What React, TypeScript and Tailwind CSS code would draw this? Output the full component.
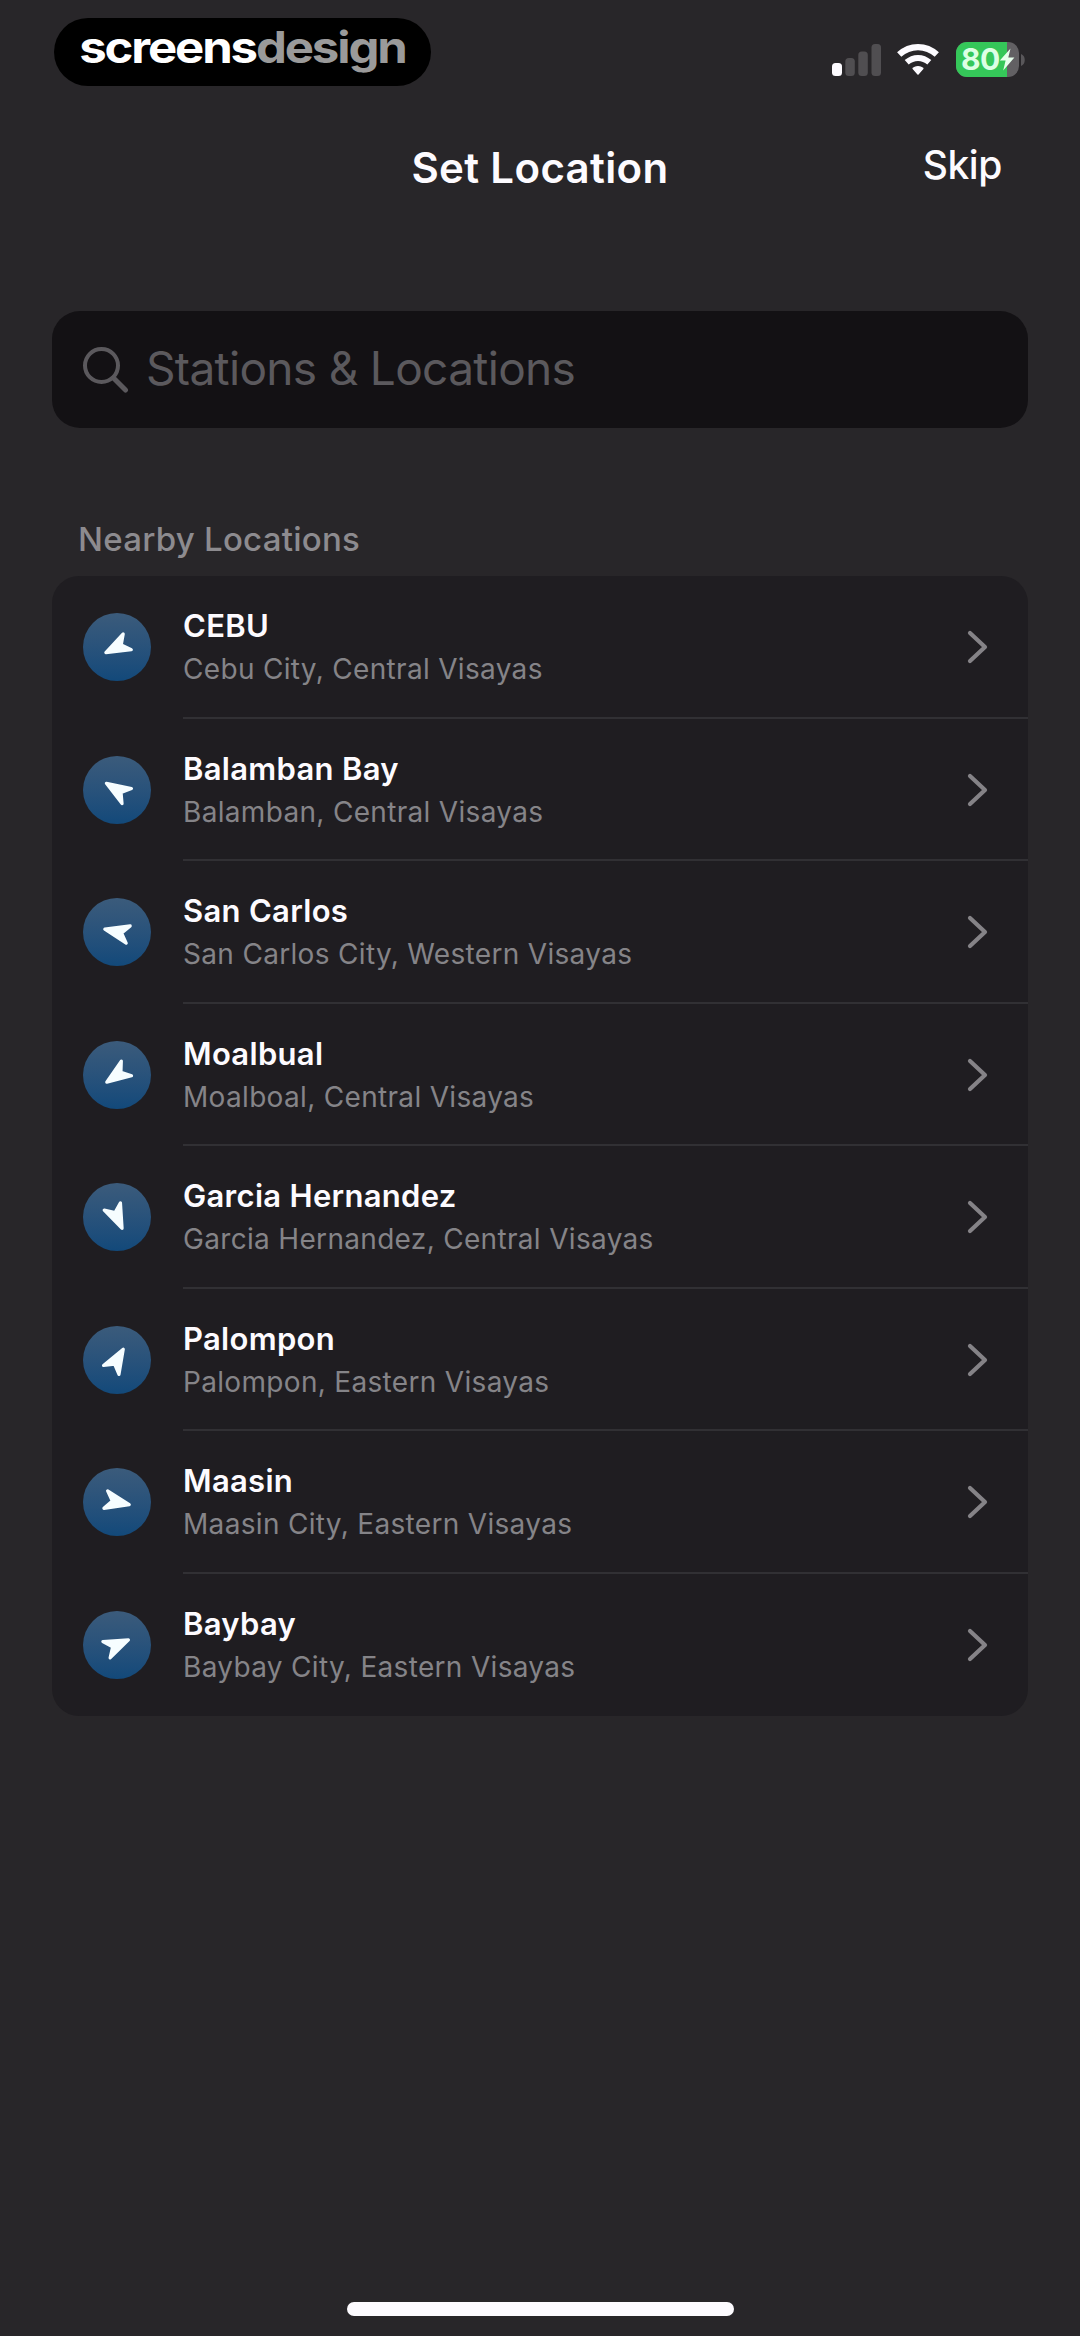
type Station = {
  name: string;
  region: string;
  // clockwise degrees from north
  bearing: number;
};

const STATIONS: Station[] = [
  { name: "CEBU", region: "Cebu City, Central Visayas", bearing: 243 },
  { name: "Balamban Bay", region: "Balamban, Central Visayas", bearing: 302 },
  { name: "San Carlos", region: "San Carlos City, Western Visayas", bearing: 283 },
  { name: "Moalbual", region: "Moalboal, Central Visayas", bearing: 235 },
  { name: "Garcia Hernandez", region: "Garcia Hernandez, Central Visayas", bearing: 156 },
  { name: "Palompon", region: "Palompon, Eastern Visayas", bearing: 30 },
  { name: "Maasin", region: "Maasin City, Eastern Visayas", bearing: 102 },
  { name: "Baybay", region: "Baybay City, Eastern Visayas", bearing: 66 },
];

function SignalBars() {
  return (
    <svg width="50" height="32" viewBox="0 0 50 32">
      <rect x="0" y="19" width="10" height="13" rx="3.5" fill="#fdfbff" />
      <rect x="13.3" y="14" width="9.5" height="18" rx="3.5" fill="#504e51" />
      <rect x="26.3" y="7.5" width="9.5" height="24.5" rx="3.5" fill="#504e51" />
      <rect x="39.5" y="0" width="9.5" height="32" rx="3.5" fill="#504e51" />
    </svg>
  );
}

function WifiIcon() {
  return (
    <svg width="42" height="32" viewBox="0 0 42 32" fill="none" stroke="#fdfbff">
      <path d="M2.2 10.6C13 0.6 29 0.6 39.8 10.6" strokeWidth="6.2" />
      <path d="M9.7 18.3C16.4 12.4 25.6 12.4 32.3 18.3" strokeWidth="6" />
      <path
        d="M16.2 24.4C19 22.2 23 22.2 25.8 24.4L21 30Z"
        fill="#fdfbff"
        strokeWidth="1.5"
        strokeLinejoin="round"
      />
    </svg>
  );
}

function Battery() {
  return (
    <div className="flex items-center gap-[2px]">
      <div className="relative flex h-[35px] w-[63px] items-center overflow-hidden rounded-[11px] bg-[#626063]">
        <div className="h-full w-[51px] bg-[#35c759]" />
        <div className="absolute inset-0 flex items-center pl-[5px]">
          <span className="-mt-[2px] text-[30px] leading-none font-bold tracking-[-0.5px] text-[#dcffe4]">80</span>
          <svg width="16" height="23" viewBox="0 0 16 23" className="-ml-px">
            <path d="M11.5 0.5L0.8 12.6H6.6L4.2 22.5L15.4 9.6H9.3Z" fill="#e6ffec" />
          </svg>
        </div>
      </div>
      <svg width="4" height="12" viewBox="0 0 4 12">
        <path d="M0 0C5 1.5 5 10.5 0 12Z" fill="#59575a" />
      </svg>
    </div>
  );
}

function StatusBar() {
  return (
    <div className="flex h-[104px] items-start justify-between pr-[55px] pl-[54px]">
      <div className="mt-[18px] flex h-[68px] w-[377px] justify-center rounded-full bg-black">
        <div className="flex scale-x-[1.115] text-[44px] leading-[58px] font-bold tracking-[-1.9px] whitespace-nowrap">
          <span className="text-white">screens</span>
          <span className="text-[#9a9a9a]">design</span>
        </div>
      </div>
      <div className="mt-[42px] flex items-center">
        <SignalBars />
        <div className="ml-[15px]">
          <WifiIcon />
        </div>
        <div className="ml-[17px]">
          <Battery />
        </div>
      </div>
    </div>
  );
}

function BearingBadge({ bearing }: { bearing: number }) {
  return (
    <div className="flex size-[68px] shrink-0 items-center justify-center rounded-full bg-linear-to-b from-[#3b5b7b] to-[#12497a]">
      <svg width="36" height="36" viewBox="-18 -18 36 36" style={{ transform: `rotate(${bearing}deg)` }}>
        <path
          d="M0 -12.5L8.9 11.5L0 4.8L-8.9 11.5Z"
          fill="#f6fdff"
          stroke="#f6fdff"
          strokeWidth="3.2"
          strokeLinejoin="round"
        />
      </svg>
    </div>
  );
}

function StationRow({ station, last }: { station: Station; last: boolean }) {
  return (
    <div className="flex h-[142.5px] pl-[31px]">
      <div className="flex items-center">
        <BearingBadge bearing={station.bearing} />
      </div>
      <div
        className={
          last
            ? "ml-[32px] flex flex-1 items-center justify-between pr-[40px]"
            : "ml-[32px] flex flex-1 items-center justify-between border-b-2 border-[#313034] pt-[2px] pr-[40px]"
        }
      >
        <div className="whitespace-nowrap">
          <div className="text-[31px] leading-[44px] font-semibold tracking-[0.3px] text-[#fdfbff]">
            {station.name}
          </div>
          <div className="text-[28px] leading-[42px] tracking-[0.32px] text-[#858488]">{station.region}</div>
        </div>
        <svg width="21" height="34" viewBox="0 0 21 34" fill="none">
          <path
            d="M3 3L18 17L3 31"
            stroke="#858387"
            strokeWidth="4.2"
            strokeLinecap="round"
            strokeLinejoin="round"
          />
        </svg>
      </div>
    </div>
  );
}

export default function App() {
  return (
    <div className="flex h-[2336px] w-[1080px] flex-col bg-[#282629] font-['Inter','Liberation_Sans',sans-serif]">
      <StatusBar />

      <header className="grid h-[128px] grid-cols-[1fr_auto_1fr] items-center">
        <div />
        <h1 className="text-[42px] leading-[52px] font-semibold tracking-[0.35px] text-[#fdfbff]">Set Location</h1>
        <button
          type="button"
          className="-mt-[6px] mr-[78px] justify-self-end text-[39px] leading-[50px] font-medium tracking-[-0.4px] text-[#fdfbff]"
        >
          Skip
        </button>
      </header>

      <div className="mx-[52px] mt-[79px] flex h-[117px] items-center rounded-[28px] bg-[#131114] pl-[31px]">
        <svg width="46" height="46" viewBox="0 0 46 46" fill="none" stroke="#5b595d" strokeLinecap="round">
          <circle cx="18.5" cy="18.5" r="16.5" strokeWidth="4" />
          <path d="M30.5 31L42.5 43" strokeWidth="5" />
        </svg>
        <span className="-mt-[3px] ml-[17px] text-[46px] leading-[56px] tracking-[-0.68px] text-[#5b595d]">
          Stations &amp; Locations
        </span>
      </div>

      <h2 className="mt-[89px] ml-[78px] h-[59px] text-[33px] leading-[44px] font-medium tracking-[0.25px] text-[#8d8b8f]">
        Nearby Locations
      </h2>
      <div className="mx-[52px] overflow-hidden rounded-[27px] bg-[#1f1d21]">
        {STATIONS.map((s, i) => (
          <StationRow key={s.name} station={s} last={i === STATIONS.length - 1} />
        ))}
      </div>

      <div className="mx-auto mt-auto mb-[20px] h-[14px] w-[387px] rounded-full bg-[#fdfbff]" />
    </div>
  );
}
